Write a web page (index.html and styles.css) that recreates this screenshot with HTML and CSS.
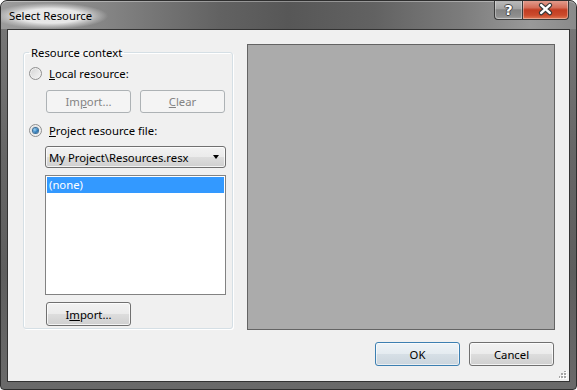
FILE: index.html
```html
<!DOCTYPE html>
<html lang="en">
<head>
  <meta charset="UTF-8" />
  <title>Select Resource</title>
  <link rel="stylesheet" href="styles.css">
</head>
<body>

  <div class="window">
    <div class="titlebar">
      <span class="title">Select Resource</span>
      <div class="caption-buttons">
        <span class="cap-btn help">?</span>
        <span class="cap-btn close">
          <svg width="47" height="19" viewBox="0 0 47 19">
            <path d="M19 5 L28 13 M28 5 L19 13" stroke="#3a3a3a" stroke-width="5" stroke-linecap="round" fill="none"/>
            <path d="M19 5 L28 13 M28 5 L19 13" stroke="#fff" stroke-width="2.6" stroke-linecap="round" fill="none"/>
          </svg>
        </span>
      </div>
    </div>

    <div class="client">
      <div class="main">
        <fieldset class="group">
          <legend>Resource context</legend>

          <div class="radio-row">
            <span class="radio"></span>
            <span><u>L</u>ocal resource:</span>
          </div>

          <div class="btn-row">
            <button class="btn disabled">Im<u>p</u>ort...</button>
            <button class="btn disabled"><u>C</u>lear</button>
          </div>

          <div class="radio-row second">
            <span class="radio checked"><span class="dot"></span></span>
            <span><u>P</u>roject resource file:</span>
          </div>

          <div class="combo">
            <span>My Project\Resources.resx</span>
            <span class="arrow"></span>
          </div>

          <div class="listbox">
            <div class="item selected">(none)</div>
          </div>

          <button class="btn import">I<u>m</u>port...</button>
        </fieldset>

        <div class="preview"></div>
      </div>

      <div class="footer">
        <button class="btn default">OK</button>
        <button class="btn">Cancel</button>
      </div>

      <svg class="grip" width="8" height="8" viewBox="0 0 8 8">
        <rect x="6" y="0" width="2" height="2" fill="#fff"/>
        <rect x="3" y="3" width="2" height="2" fill="#fff"/>
        <rect x="6" y="3" width="2" height="2" fill="#fff"/>
        <rect x="0" y="6" width="2" height="2" fill="#fff"/>
        <rect x="3" y="6" width="2" height="2" fill="#fff"/>
        <rect x="6" y="6" width="2" height="2" fill="#fff"/>
        <rect x="5" y="-1" width="2" height="2" fill="#a5a5a5"/>
        <rect x="2" y="2" width="2" height="2" fill="#a5a5a5"/>
        <rect x="5" y="2" width="2" height="2" fill="#a5a5a5"/>
        <rect x="-1" y="5" width="2" height="2" fill="#a5a5a5"/>
        <rect x="2" y="5" width="2" height="2" fill="#a5a5a5"/>
        <rect x="5" y="5" width="2" height="2" fill="#a5a5a5"/>
      </svg>
    </div>
  </div>

</body>
</html>
```

FILE: styles.css
```css
:root {
  --face: #f0f0f0;
  --frame: #6b6b6b;
  --btn-border: #707070;
  --select: #3399ff;
  --ui-size: 11.3px;
}

* {
  margin: 0;
  padding: 0;
  box-sizing: border-box;
  font-family: "Noto Sans", "Open Sans", sans-serif;
}

body {
  width: 577px;
  height: 390px;
  background: #fff;
}

.window {
  width: 577px;
  height: 390px;
  border: 1px solid #2e2e2e;
  border-radius: 7px 7px 4px 4px;
  background: linear-gradient(to bottom, #7a7a7a, #666 40%, #5e5e5e 70%, #6a6a6a);
  padding: 0 6px 7px 6px;
  display: flex;
  flex-direction: column;
  overflow: hidden;
}

/* title bar */

.titlebar {
  height: 28px;
  margin: 0 -6px;
  padding: 0 7px;
  display: flex;
  align-items: flex-start;
  border-radius: 6px 6px 0 0;
  box-shadow: inset 0 1px 0 rgba(255, 255, 255, 0.35);
  background: linear-gradient(to right, #9c9c9c 0%, #858585 18%, #626262 38%, #575757 50%, #626262 65%, #7c7c7c 80%, #999 92%, #8a8a8a 100%);
}

.title {
  margin-top: 2px;
  margin-left: -15px;
  padding: 5px 16px 6px 16px;
  font-size: var(--ui-size);
  line-height: 15px;
  color: #000;
  background: radial-gradient(closest-side, rgba(236, 236, 236, 0.95) 55%, rgba(215, 215, 215, 0.55) 78%, rgba(200, 200, 200, 0) 100%);
}

.caption-buttons {
  margin-left: auto;
  margin-top: -1px;
  display: flex;
}

.cap-btn {
  height: 20px;
  border: 1px solid #3a3a3a;
  border-top: none;
  box-shadow: inset 0 0 0 1px rgba(255, 255, 255, 0.35);
  display: flex;
  align-items: center;
  justify-content: center;
}

.cap-btn.help {
  width: 28px;
  border-right: none;
  border-radius: 0 0 0 4px;
  background: linear-gradient(to bottom, #bdbdbd, #a3a3a3 45%, #838383 52%, #8e8e8e 85%, #a5a5a5);
  font-family: "DejaVu Sans", sans-serif;
  font-weight: bold;
  font-size: 14px;
  color: #fff;
  padding-top: 1px;
  text-shadow: 1px 0 0 #444, -1px 0 0 #444, 0 1px 0 #444, 0 -1px 0 #444;
}

.cap-btn.close {
  width: 47px;
  border-radius: 0 0 4px 0;
  background: linear-gradient(to bottom, #e3a294, #d46e59 40%, #c23d22 52%, #cc4a2c 80%, #e07a55);
}

/* client area */

.client {
  position: relative;
  flex: 1;
  background: var(--face);
  border: 1px solid #333;
  padding: 14px 14px 15px 15px;
  display: flex;
  flex-direction: column;
  font-size: var(--ui-size);
  line-height: 15px;
  color: #000;
}

.main {
  display: flex;
  height: 286px;
}

.group {
  width: 210px;
  height: 284px;
  margin-top: 1px;
  margin-right: 14px;
  border: 1px solid #d5dfe5;
  border-radius: 3px;
  padding: 6px 0 0 5px;
  box-shadow: inset 1px 1px 0 #fff, 1px 1px 0 #fff;
}

.group legend {
  padding: 0 2px;
  font-size: var(--ui-size);
  line-height: 15px;
}

.radio-row {
  display: flex;
  align-items: center;
  gap: 7px;
  height: 15px;
}

.radio-row.second {
  margin-top: 10px;
}

.radio {
  width: 13px;
  height: 13px;
  border-radius: 50%;
  border: 1px solid #8f8f8f;
  background: linear-gradient(135deg, #d4d4d4, #f6f6f6);
  box-shadow: inset 0 0 0 1px #f0f0f0;
  display: flex;
  align-items: center;
  justify-content: center;
}

.radio .dot {
  width: 5px;
  height: 5px;
  border-radius: 50%;
  background: radial-gradient(circle at 35% 35%, #9fd4f5, #2a78b8 60%, #1a4f80);
  box-shadow: 0 0 0 1px #3c6f99;
}

.btn-row {
  display: flex;
  gap: 9px;
  margin-top: 9px;
  margin-left: 17px;
}

.btn {
  height: 24px;
  width: 85px;
  border: 1px solid var(--btn-border);
  border-radius: 3px;
  background: linear-gradient(to bottom, #f2f2f2 0%, #ebebeb 50%, #dddddd 51%, #cfcfcf 100%);
  box-shadow: inset 0 0 0 1px rgba(255, 255, 255, 0.75);
  font-size: var(--ui-size);
  line-height: 15px;
  color: #000;
  text-align: center;
}

.btn.disabled {
  height: 23px;
  border-color: #adb2b5;
  background: #f4f4f4;
  box-shadow: none;
  color: #838383;
}

.combo {
  margin-top: 8px;
  margin-left: 16px;
  width: 181px;
  height: 22px;
  border: 1px solid var(--btn-border);
  border-radius: 3px;
  background: linear-gradient(to bottom, #f2f2f2 0%, #ebebeb 50%, #dddddd 51%, #cfcfcf 100%);
  box-shadow: inset 0 0 0 1px rgba(255, 255, 255, 0.75);
  display: flex;
  align-items: center;
  padding: 0 6px 0 3px;
}

.combo .arrow {
  margin-left: auto;
  border-left: 3.5px solid transparent;
  border-right: 3.5px solid transparent;
  border-top: 4px solid #000;
}

.listbox {
  margin-top: 7px;
  margin-left: 16px;
  width: 181px;
  height: 120px;
  border: 1px solid #828282;
  background: #fff;
  padding: 1px;
}

.listbox .item {
  height: 16px;
  line-height: 16px;
  padding-left: 2px;
}

.listbox .item.selected {
  background: var(--select);
  color: #fff;
}

.btn.import {
  margin-top: 7px;
  margin-left: 17px;
}

.preview {
  width: 308px;
  height: 286px;
  border: 1px solid #646464;
  background: #ababab;
}

.footer {
  margin-top: 12px;
  display: flex;
  justify-content: flex-end;
  gap: 9px;
  padding-right: 1px;
}

.footer .btn {
  width: 85px;
}

.btn.default {
  border-color: #3c7fb1;
  background: linear-gradient(to bottom, #eef3f7 0%, #e4ebf0 50%, #d6dfe6 51%, #cbd5dd 100%);
  box-shadow: inset 0 0 0 1px rgba(255, 255, 255, 0.6);
}

.grip {
  position: absolute;
  right: 2px;
  bottom: 2px;
}
```
